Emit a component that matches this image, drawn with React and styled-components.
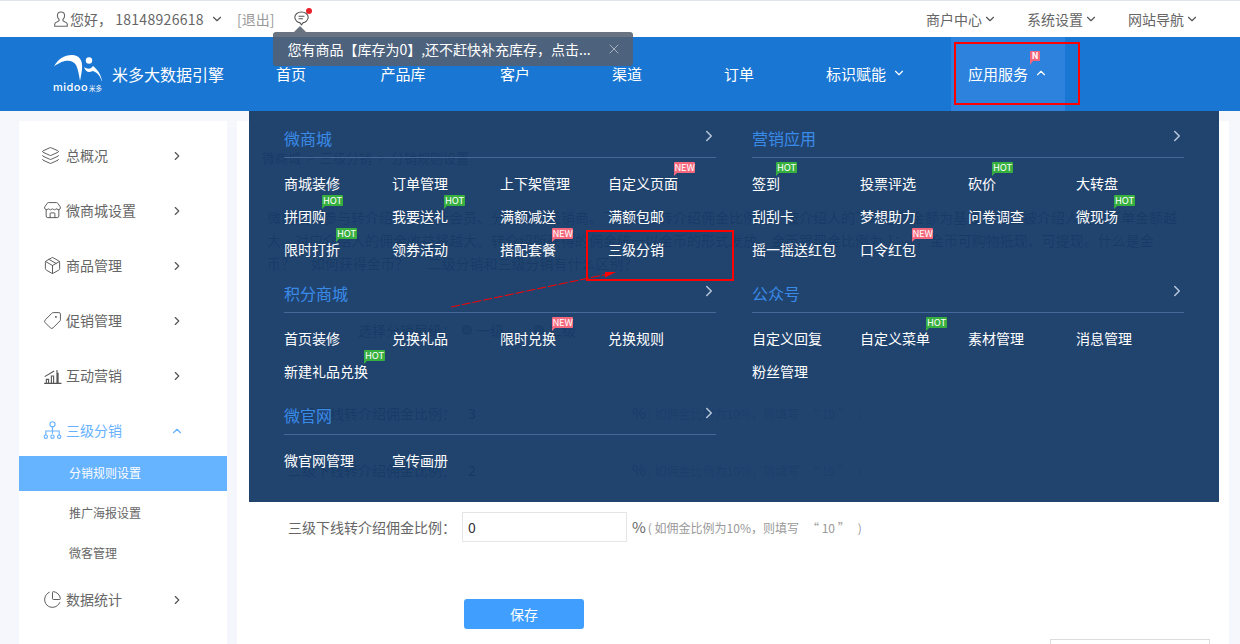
import React from 'react';
import styled, { createGlobalStyle } from 'styled-components';
import { ChevronDown, ChevronUp, ChevronRight, Layers, Store, Package, Tag, PieChart, X } from 'lucide-react';

const GlobalStyle = createGlobalStyle`
  html, body {
    margin: 0;
    padding: 0;
    background: #f5f7fc;
  }
  body {
    font-family: "Noto Sans CJK SC", "Liberation Sans", sans-serif;
    font-size: 14px;
    color: #666;
  }
`;

const Page = styled.div`
  position: relative;
  width: 1240px;
  height: 644px;
  overflow: hidden;
`;

/* top white bar */
const TopBar = styled.div`
  display: flex;
  align-items: center;
  justify-content: space-between;
  height: 36px;
  padding: 0 41px 0 54px;
  background: #fff;
  border-top: 1px solid #dfe4ed;
`;

const TopLeft = styled.div`
  display: flex;
  align-items: center;
`;

const Greeting = styled.span`
  margin-left: 2px;
  padding-bottom: 1px;
  color: #666;
  white-space: pre;
`;

const Phone = styled.span`
  letter-spacing: 0.3px;
`;

const Logout = styled.span`
  margin-left: 13px;
  padding-bottom: 1px;
  color: #999;
`;

const MessageWrap = styled.div`
  position: relative;
  display: flex;
  margin: -1px 0 0 20px;
`;

const RedDot = styled.i`
  position: absolute;
  top: -3px;
  right: -3px;
  width: 6px;
  height: 6px;
  border-radius: 50%;
  background: #e8202a;
`;

const Notice = styled.div`
  position: absolute;
  z-index: 5;
  top: 21px;
  left: -21px;
  display: flex;
  align-items: center;
  justify-content: space-between;
  width: 360px;
  height: 34px;
  padding: 0 11px 0 14px;
  box-sizing: border-box;
  border-radius: 3px;
  background: rgba(84, 96, 112, 0.88);
  color: #fff;
  font-size: 14px;
  white-space: nowrap;

  &::before {
    content: '';
    position: absolute;
    top: -6px;
    left: 21px;
    border-left: 6px solid transparent;
    border-right: 6px solid transparent;
    border-bottom: 6px solid #6a7480;
  }
`;

const TopRight = styled.div`
  display: flex;
  align-items: center;
  gap: 30px;
`;

const TopLink = styled.span`
  display: flex;
  align-items: center;
  gap: 1px;
  padding-bottom: 1px;
  color: #666;
`;

/* blue bar */
const MainBar = styled.div`
  position: relative;
  display: flex;
  align-items: center;
  height: 74px;
  padding-left: 53px;
  background: #1976d2;
  color: #fff;
`;

const LogoBlock = styled.div`
  display: flex;
  align-items: center;
  width: 182px;
  flex: none;
`;

const LogoName = styled.span`
  margin-left: 9px;
  font-size: 16px;
  white-space: nowrap;
`;

const NavItem = styled.div`
  display: flex;
  align-items: center;
  justify-content: center;
  width: 112px;
  height: 100%;
  padding-bottom: 2px;
  box-sizing: border-box;
  font-size: 15px;
`;

const NavDrop = styled.div`
  position: relative;
  display: flex;
  align-items: center;
  gap: 6px;
  width: 114px;
  height: 100%;
  margin-left: ${(p) => p.$gap}px;
  padding: 0 0 2px 17px;
  box-sizing: border-box;
  font-size: 15px;
  background: ${(p) => (p.$open ? '#2c82dd' : 'transparent')};
`;

const NewFlag = styled.span`
  position: absolute;
  top: 14px;
  left: 79px;
  width: 10px;
  height: 10px;
  background: #f2667c;
  color: #fff;
  font-size: 9px;
  font-weight: 700;
  line-height: 10px;
  text-align: center;

  &::after {
    content: '';
    position: absolute;
    top: 10px;
    left: 0;
    border-top: 4px solid #f2667c;
    border-right: 3px solid transparent;
  }
`;

/* dropdown over the page */
const Menu = styled.div`
  position: absolute;
  z-index: 3;
  top: 74px;
  left: 249px;
  display: grid;
  grid-template-columns: 432px 432px;
  column-gap: 36px;
  align-content: start;
  width: 970px;
  height: 391px;
  padding: 11px 35px 0;
  box-sizing: border-box;
  background: rgba(19, 56, 102, 0.94);
`;

const MenuGroup = styled.div`
  margin-bottom: 10px;
`;

const MenuTitle = styled.div`
  display: flex;
  align-items: center;
  justify-content: space-between;
  height: 36px;
  padding-bottom: 3px;
  box-sizing: border-box;
  border-bottom: 1px solid #46699a;
  color: #3a8ae8;
  font-size: 16px;

  svg {
    margin: -4px -2px 0 0;
    color: #b9c7da;
  }
`;

const MenuList = styled.div`
  display: grid;
  grid-template-columns: repeat(4, 108px);
  grid-auto-rows: 33px;
  padding-top: 10px;
`;

const MenuCell = styled.div`
  display: flex;
  align-items: center;
  padding-bottom: 4px;
`;

const MenuText = styled.span`
  position: relative;
  color: #fff;
  font-size: 14px;
  white-space: nowrap;
`;

const Badge = styled.em`
  position: absolute;
  top: -11px;
  left: calc(100% - 4px);
  width: 21px;
  height: 11px;
  border-radius: 1px;
  background: ${(p) => (p.$kind === 'NEW' ? '#f4697d' : '#38b03f')};
  color: #fff;
  font-size: 9.5px;
  font-style: normal;
  letter-spacing: -0.2px;
  line-height: 11px;
  text-align: center;

  &::after {
    content: '';
    position: absolute;
    top: 11px;
    left: 0;
    border-top: 3px solid ${(p) => (p.$kind === 'NEW' ? '#f4697d' : '#38b03f')};
    border-right: 3px solid transparent;
  }
`;

/* sidebar + content */
const Body = styled.div`
  display: flex;
  align-items: stretch;
  gap: 10px;
  height: 533px;
  padding: 10px 0 0 19px;
  box-sizing: border-box;
`;

const Sidebar = styled.aside`
  flex: none;
  width: 208px;
  padding-top: 8px;
  box-sizing: border-box;
  background: #fff;
`;

const SideItem = styled.div`
  display: flex;
  align-items: center;
  height: 55px;
  padding: 0 0 2px 24px;
  box-sizing: border-box;
  color: ${(p) => (p.$on ? '#66b1ff' : '#666')};
  font-size: 14px;

  > svg:first-child {
    flex: none;
    width: 19px;
    height: 19px;
    margin-right: 4px;
  }
`;

const SideLabel = styled.span`
  width: 104px;
  padding-bottom: 2px;
`;

const SubItem = styled.div`
  display: flex;
  align-items: center;
  height: ${(p) => (p.$on ? 35 : 40)}px;
  margin-top: ${(p) => (p.$on ? -3 : 0)}px;
  margin-bottom: ${(p) => (p.$on ? 2 : 0)}px;
  padding: 0 0 2px 50px;
  box-sizing: border-box;
  background: ${(p) => (p.$on ? '#66b3ff' : 'transparent')};
  color: ${(p) => (p.$on ? '#fff' : '#666')};
  font-size: 12px;
`;

const LayersIcon = styled(Layers)`
  transform: translateX(-2px);
`;

const TagIcon = styled(Tag)`
  transform: scaleX(-1);
`;

const Content = styled.main`
  flex: none;
  width: 992px;
  background: #fff;
`;

const Crumb = styled.div`
  margin: 27px 0 38px 25px;
  color: #666;
  font-size: 13px;
  line-height: 20px;
  word-spacing: 3px;
`;

const Intro = styled.p`
  margin: 0 0 40px 30px;
  color: #666;
  font-size: 14px;
  line-height: 23px;
  white-space: pre;
`;

const FormRow = styled.div`
  display: flex;
  align-items: center;
  height: 30px;
  margin-bottom: ${(p) => p.$gap}px;
`;

const FormLabel = styled.label`
  flex: none;
  width: 219px;
  margin-right: 6px;
  color: #666;
  font-size: 14px;
  text-align: right;
  white-space: nowrap;
`;

const RatioInput = styled.input`
  width: 165px;
  height: 30px;
  padding: 0 5px;
  box-sizing: border-box;
  border: 1px solid #e5e5e5;
  color: #333;
  font: 14px "Noto Sans CJK SC", "Liberation Sans", sans-serif;
  outline: none;
`;

const Percent = styled.span`
  margin: -2px 0 0 5px;
  color: #666;
  font-size: 15px;
`;

const Hint = styled.span`
  margin-left: 2px;
  color: #999;
  font-size: 12px;
  white-space: pre;
`;

const RadioDot = styled.i`
  width: 10px;
  height: 10px;
  margin: 0 4px 0 ${(p) => p.$left}px;
  box-sizing: border-box;
  border: 2px solid #888;
  border-radius: 50%;
  background: #bbb;
`;

const SaveButton = styled.button`
  display: block;
  width: 120px;
  height: 30px;
  margin: 57px 0 10px 227px;
  border: 0;
  border-radius: 3px;
  background: #409eff;
  color: #fff;
  font: 14px "Noto Sans CJK SC", "Liberation Sans", sans-serif;
`;

const BottomRow = styled.div`
  display: flex;
  justify-content: flex-end;
  padding-right: 19px;
`;

const BottomBox = styled.div`
  width: 160px;
  height: 30px;
  box-sizing: border-box;
  border: 1px solid #ddd;
`;

/* red marks painted on the screenshot */
const MarkBox = styled.div`
  position: absolute;
  z-index: 6;
  left: ${(p) => p.$x}px;
  top: ${(p) => p.$y}px;
  width: ${(p) => p.$w}px;
  height: ${(p) => p.$h}px;
  box-sizing: border-box;
  border: 2px solid #f00;
`;

const MarkArrow = styled.svg`
  position: absolute;
  z-index: 6;
  left: 440px;
  top: 260px;
`;

const menuGroups = [
  {
    title: '微商城',
    items: [
      ['商城装修'], ['订单管理'], ['上下架管理'], ['自定义页面', 'NEW'],
      ['拼团购', 'HOT'], ['我要送礼', 'HOT'], ['满额减送'], ['满额包邮'],
      ['限时打折', 'HOT'], ['领券活动'], ['搭配套餐', 'NEW'], ['三级分销'],
    ],
  },
  {
    title: '营销应用',
    items: [
      ['签到', 'HOT'], ['投票评选'], ['砍价', 'HOT'], ['大转盘'],
      ['刮刮卡'], ['梦想助力'], ['问卷调查'], ['微现场', 'HOT'],
      ['摇一摇送红包'], ['口令红包', 'NEW'],
    ],
  },
  {
    title: '积分商城',
    items: [
      ['首页装修'], ['兑换礼品'], ['限时兑换', 'NEW'], ['兑换规则'],
      ['新建礼品兑换', 'HOT'],
    ],
  },
  {
    title: '公众号',
    items: [
      ['自定义回复'], ['自定义菜单', 'HOT'], ['素材管理'], ['消息管理'],
      ['粉丝管理'],
    ],
  },
  {
    title: '微官网',
    items: [['微官网管理'], ['宣传画册']],
  },
];

const introText = [
  '微商城人参与转介绍人员包括会员、分销商、经销商。下单后，转介绍佣金比例为：被介绍人的下单总额金额为基数，当且被介绍人的总下单金额越',
  '大。对应介绍人的佣金收益将越大。转介绍所获得的佣金统一以金币的形式发放。金币跟现金比例为 1：1，金币可购物抵现、可提现。什么是金',
  '币？     如何获得金币？      二级分销和三级分销有什么区别？',
].join('\n');

const UserIcon = () => (
  <svg width="14" height="16" viewBox="0 0 14 16" fill="none" stroke="#666" strokeWidth="1.1">
    <path d="M7 1c2.2 0 3.6 1.6 3.6 3.8 0 1.6-.8 3-1.7 3.7v1.2c0 .6 4.4 1.3 4.4 3.3v2.3H.7V13c0-2 4.4-2.7 4.4-3.3V8.5C4.200 7.800 3.400 6.400 3.400 4.800 3.400 2.600 4.800 1 7 1z" />
  </svg>
);

const ChatIcon = () => (
  <svg width="15" height="15" viewBox="0 0 15 15" fill="none" stroke="#555" strokeWidth="1.1">
    <path d="M7.500 1C3.900 1 .8 3.200.8 6.300c0 3 3 5.200 5 5.300l1.700 2.200 1.700-2.200c2-.1 5-2.300 5-5.300C14.200 3.200 11.100 1 7.500 1z" />
    <path d="M4.500 5.200h6M4.500 7.800h4.500" />
  </svg>
);

const Logo = () => (
  <svg width="50" height="40" viewBox="0 0 50 40" fill="#fff">
    <path d="M1 12.500C5 5 11 1 19 1c7 0 11 5 10 14-.3 3-1 7-2 12-1-6-2-12-4-16C20 6 12 4 1 12.500z" />
    <circle cx="36" cy="6.500" r="3.200" />
    <path d="M31 13c3 2 6 3 9-1 4 3 8 8 9 15-.1 0-.2 0-.3 0-2-6-5-9-9-10-4 2-7 1-8.700-4z" />
    <text x="0" y="37" fontSize="11" fontWeight="500" fontFamily="Inter, sans-serif" letterSpacing=".5">midoo</text>
    <text x="36" y="37" fontSize="6.500" fontFamily="'Noto Sans CJK SC', sans-serif">米多</text>
  </svg>
);

const ChartIcon = () => (
  <svg viewBox="0 0 17 17" fill="none" stroke="#555" strokeWidth="1">
    <path d="M1 15.500h15.500M3 15v-3h2v3M7.500 15V9h2v6M12.500 15V3.500M1.500 9.500L10 4.500M13.500 15V6" />
  </svg>
);

const TreeIcon = () => (
  <svg viewBox="0 0 17 17" fill="none" stroke="#66b1ff" strokeWidth="1">
    <circle cx="8.500" cy="3" r="2.300" />
    <path d="M8.500 5.300v6.200M2.500 12.500V9h12v3.500" />
    <circle cx="2.500" cy="14" r="1.500" />
    <circle cx="8.500" cy="14" r="1.500" />
    <circle cx="14.500" cy="14" r="1.500" />
  </svg>
);

const sideItems = [
  { label: '总概况', icon: <LayersIcon strokeWidth={1.2} color="#555" /> },
  { label: '微商城设置', icon: <Store strokeWidth={1.2} color="#555" /> },
  { label: '商品管理', icon: <Package strokeWidth={1.2} color="#555" /> },
  { label: '促销管理', icon: <TagIcon strokeWidth={1.2} color="#555" /> },
  { label: '互动营销', icon: <ChartIcon /> },
];

const hintText = '( 如佣金比例为10%，则填写   “ 10 ”   )';

const App = () => {
  return (
    <Page>
      <GlobalStyle />
      <TopBar>
        <TopLeft>
          <UserIcon />
          <Greeting>您好， <Phone>18148926618</Phone></Greeting>
          <ChevronDown size={14} color="#555" strokeWidth={2} style={{ marginLeft: 6 }} />
          <Logout>[退出]</Logout>
          <MessageWrap>
            <ChatIcon />
            <RedDot />
            <Notice>
              您有商品【库存为0】,还不赶快补充库存，点击...
              <X size={16} strokeWidth={1} color="#d5dae0" />
            </Notice>
          </MessageWrap>
        </TopLeft>
        <TopRight>
          <TopLink>商户中心<ChevronDown size={14} color="#555" strokeWidth={2} /></TopLink>
          <TopLink>系统设置<ChevronDown size={14} color="#555" strokeWidth={2} /></TopLink>
          <TopLink>网站导航<ChevronDown size={14} color="#555" strokeWidth={2} /></TopLink>
        </TopRight>
      </TopBar>

      <MainBar>
        <LogoBlock>
          <Logo />
          <LogoName>米多大数据引擎</LogoName>
        </LogoBlock>
        <NavItem>首页</NavItem>
        <NavItem>产品库</NavItem>
        <NavItem>客户</NavItem>
        <NavItem>渠道</NavItem>
        <NavItem>订单</NavItem>
        <NavDrop $gap={14}>
          标识赋能
          <ChevronDown size={14} strokeWidth={2} />
        </NavDrop>
        <NavDrop $gap={28} $open>
          应用服务
          <ChevronUp size={14} strokeWidth={2} />
          <NewFlag>N</NewFlag>
        </NavDrop>

        <Menu>
          {menuGroups.map((group) => (
            <MenuGroup key={group.title}>
              <MenuTitle>
                {group.title}
                <ChevronRight size={18} strokeWidth={2} />
              </MenuTitle>
              <MenuList>
                {group.items.map(([name, badge]) => (
                  <MenuCell key={name}>
                    <MenuText>
                      {name}
                      {badge && <Badge $kind={badge}>{badge}</Badge>}
                    </MenuText>
                  </MenuCell>
                ))}
              </MenuList>
            </MenuGroup>
          ))}
        </Menu>
      </MainBar>

      <Body>
        <Sidebar>
          {sideItems.map((item) => (
            <SideItem key={item.label}>
              {item.icon}
              <SideLabel>{item.label}</SideLabel>
              <ChevronRight size={14} strokeWidth={2} color="#555" />
            </SideItem>
          ))}
          <SideItem $on>
            <TreeIcon />
            <SideLabel>三级分销</SideLabel>
            <ChevronUp size={14} strokeWidth={2} color="#66b1ff" />
          </SideItem>
          <SubItem $on>分销规则设置</SubItem>
          <SubItem>推广海报设置</SubItem>
          <SubItem>微客管理</SubItem>
          <SideItem>
            <PieChart strokeWidth={1.2} color="#555" />
            <SideLabel>数据统计</SideLabel>
            <ChevronRight size={14} strokeWidth={2} color="#555" />
          </SideItem>
        </Sidebar>

        <Content>
          <Crumb>微商城 &gt; 三级分销 &gt; 分销规则设置</Crumb>
          <Intro>{introText}</Intro>
          <FormRow $gap={53}>
            <FormLabel>选择分销层级：</FormLabel>
            <RadioDot $left={0} />
            一级
            <RadioDot $left={30} />
            二级
          </FormRow>
          <FormRow $gap={27}>
            <FormLabel>一级下线转介绍佣金比例：</FormLabel>
            <RatioInput readOnly value="3" />
            <Percent>%</Percent>
            <Hint>{hintText}</Hint>
          </FormRow>
          <FormRow $gap={27}>
            <FormLabel>二级下线转介绍佣金比例：</FormLabel>
            <RatioInput readOnly value="2" />
            <Percent>%</Percent>
            <Hint>{hintText}</Hint>
          </FormRow>
          <FormRow $gap={0}>
            <FormLabel>三级下线转介绍佣金比例：</FormLabel>
            <RatioInput readOnly value="0" />
            <Percent>%</Percent>
            <Hint>{hintText}</Hint>
          </FormRow>
          <SaveButton>保存</SaveButton>
          <BottomRow>
            <BottomBox />
          </BottomRow>
        </Content>
      </Body>

      <MarkBox $x={954} $y={42} $w={126} $h={63} />
      <MarkBox $x={586} $y={230} $w={148} $h={51} />
      <MarkArrow width="190" height="60" viewBox="0 0 190 60">
        <path d="M11 47L168 14" stroke="#f00" strokeWidth="1" strokeDasharray="9 2" fill="none" />
        <path d="M176 12L165 12L165 17.500z" fill="#f00" />
      </MarkArrow>
    </Page>
  );
};

export default App;
